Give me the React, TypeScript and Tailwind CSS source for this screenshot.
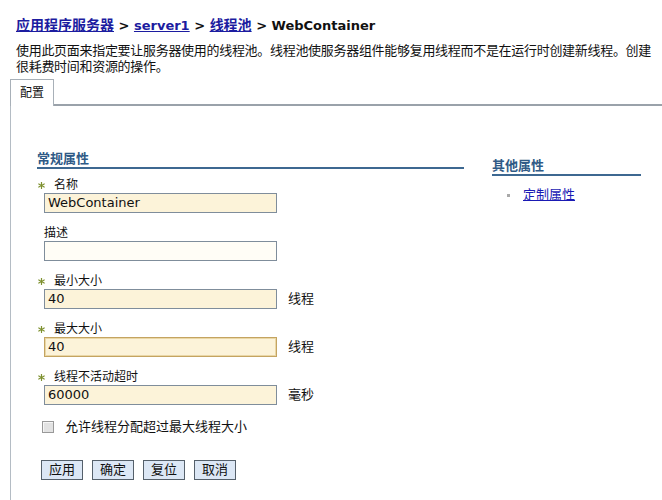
import React from 'react';

interface FieldProps {
  label: string;
  value?: string;
  required?: boolean;
  unit?: string;
  focused?: boolean;
  plain?: boolean;
}

function Star() {
  return (
    <svg width="7" height="7" viewBox="0 0 7 7" className="block">
      <g stroke="#7e9130" strokeWidth="1.2" strokeLinecap="round">
        <line x1="3.5" y1="0.5" x2="3.5" y2="6.5" />
        <line x1="0.8" y1="2" x2="6.2" y2="5" />
        <line x1="0.8" y1="5" x2="6.2" y2="2" />
      </g>
    </svg>
  );
}

function Field({ label, value = '', required, unit, focused, plain }: FieldProps) {
  return (
    <div className="flex flex-col">
      <div className="flex items-center h-[16px] leading-[16px] text-[12px] text-[#111]">
        {required && (
          <span className="-ml-[6px] w-[16px] flex items-center">
            <Star />
          </span>
        )}
        <span>{label}</span>
      </div>
      <div className="flex items-center">
        <div
          className={
            focused
              ? 'w-[233px] h-[20px] border border-[#c4a461] shadow-[inset_0_0_0_1px_#ead7a6] bg-[#fcf3d9] pl-[3px] flex items-center text-[13px] text-[#111]'
              : plain
              ? 'w-[233px] h-[20px] border border-[#7f8d9b] bg-[#fffdf6] pl-[3px] flex items-center text-[13px] text-[#111]'
              : 'w-[233px] h-[20px] border border-[#7f8d9b] bg-[#fcf3d9] pl-[3px] flex items-center text-[13px] text-[#111]'
          }
        >
          {value}
        </div>
        {unit && <span className="ml-[11px] text-[13px] text-[#111]">{unit}</span>}
      </div>
    </div>
  );
}

function Btn({ children }: { children: React.ReactNode }) {
  return (
    <div className="h-[20px] px-[7px] flex items-center border border-[#55606b] bg-[#dce7f5] text-[13px] text-[#111]">
      {children}
    </div>
  );
}

export default function App() {
  return (
    <div className="w-[662px] h-[500px] overflow-hidden bg-white font-['DejaVu_Sans','Noto_Sans_CJK_SC',sans-serif] text-[#111]">
      <div className="pt-[16px] pl-[16px]">
        <div className="h-[18px] leading-[18px] text-[13px] font-bold whitespace-nowrap">
          <a className="underline text-[#1c1ca0] text-[14px]">应用程序服务器</a>
          <span> &gt; </span>
          <a className="underline text-[#1c1ca0]">server1</a>
          <span> &gt; </span>
          <a className="underline text-[#1c1ca0] text-[14px]">线程池</a>
          <span> &gt; WebContainer</span>
        </div>
        <div className="mt-[9px] text-[13px] leading-[16px] tracking-[-0.3px] whitespace-nowrap">
          使用此页面来指定要让服务器使用的线程池。线程池使服务器组件能够复用线程而不是在运行时创建新线程。创建
          <br />
          很耗费时间和资源的操作。
        </div>
      </div>

      <div className="mt-[4px] ml-[10px] flex">
        <div className="h-[27px] px-[9px] flex items-center border-t border-l border-r border-[#a8b0b8] text-[12px]">
          配置
        </div>
        <div className="flex-1 border-b-2 border-[#9aa2aa]" />
      </div>

      <div className="ml-[10px] border-l border-[#b4bcc4] h-[400px] pl-[26px] pt-[45px] flex gap-[28px]">
        <div className="w-[427px]">
          <div className="h-[18px] leading-[16px] border-b-2 border-[#3d6891] text-[13px] font-bold text-[#2f5a86]">
            常规属性
          </div>
          <div className="pl-[7px] mt-[8px] flex flex-col gap-[12px]">
            <Field label="名称" required value="WebContainer" />
            <Field label="描述" plain />
            <Field label="最小大小" required value="40" unit="线程" />
            <Field label="最大大小" required value="40" unit="线程" focused />
            <Field label="线程不活动超时" required value="60000" unit="毫秒" />
          </div>
          <div className="mt-[14px] flex items-center h-[16px]">
            <div className="ml-[5px] w-[12px] h-[12px] border border-[#999] bg-[#e2e2e2] shadow-[inset_1px_1px_0_#f6f6f6]" />
            <span className="ml-[11px] text-[13px]">允许线程分配超过最大线程大小</span>
          </div>
          <div className="mt-[25px] ml-[4px] flex gap-[9px]">
            <Btn>应用</Btn>
            <Btn>确定</Btn>
            <Btn>复位</Btn>
            <Btn>取消</Btn>
          </div>
        </div>

        <div className="w-[149px] mt-[7px]">
          <div className="h-[18px] leading-[16px] border-b-2 border-[#3d6891] text-[13px] font-bold text-[#2f5a86]">
            其他属性
          </div>
          <div className="mt-[11px] flex items-center h-[16px] pl-[15px]">
            <span className="w-[3px] h-[3px] bg-[#a9a9a9]" />
            <a className="ml-[13px] underline text-[13px] text-[#1a1ab4]">定制属性</a>
          </div>
        </div>
      </div>
    </div>
  );
}
